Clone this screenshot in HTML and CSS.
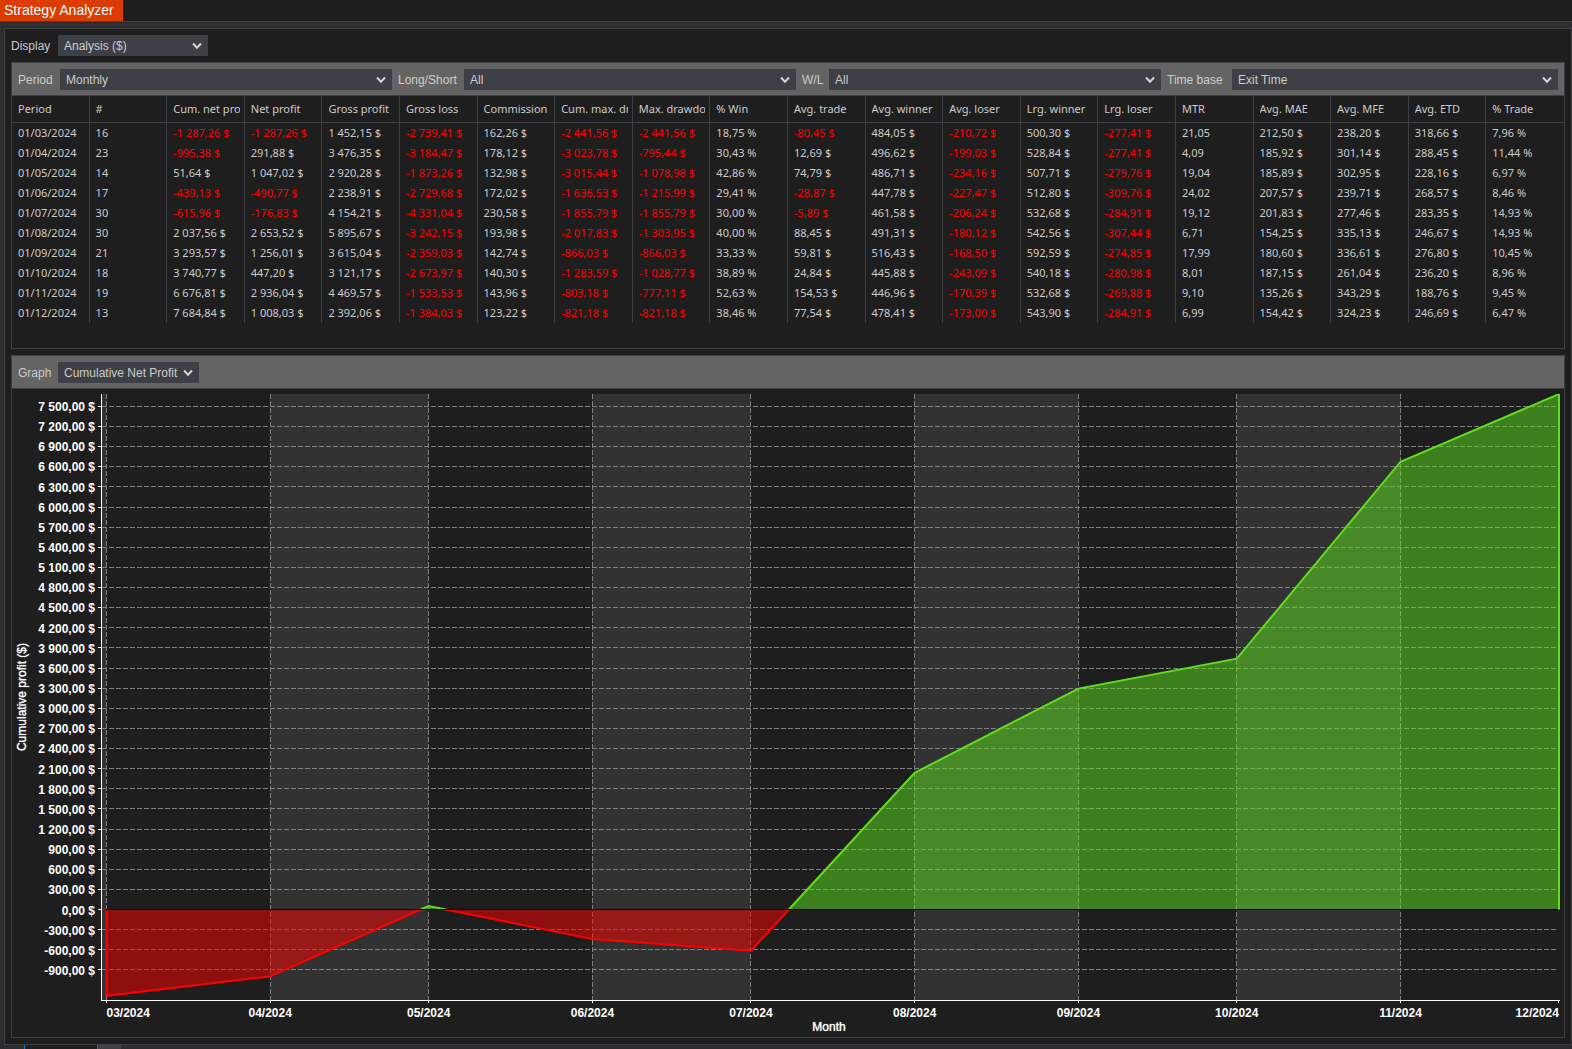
FILE: index.html
```html
<!DOCTYPE html>
<html lang="en">
<head>
<meta charset="utf-8">
<title>Strategy Analyzer</title>
<link rel="stylesheet" href="styles.css">
</head>
<body>
<header class="titlebar"><h1 class="tab">Strategy Analyzer</h1></header>
<main class="window">
  <div class="field display-field">
    <label for="display">Display</label>
    <span class="picker"><select id="display"><option>Analysis ($)</option></select><svg class="chevron" viewBox="0 0 10 8" aria-hidden="true"><path d="M1 1.5 5 5.8 9 1.5"/></svg></span>
  </div>

  <section class="panel results">
    <div class="toolbar">
      <label class="w-period" for="period">Period</label>
      <span class="picker grow"><select id="period"><option>Monthly</option></select><svg class="chevron" viewBox="0 0 10 8" aria-hidden="true"><path d="M1 1.5 5 5.8 9 1.5"/></svg></span>
      <label class="w-side" for="side">Long/Short</label>
      <span class="picker grow"><select id="side"><option>All</option></select><svg class="chevron" viewBox="0 0 10 8" aria-hidden="true"><path d="M1 1.5 5 5.8 9 1.5"/></svg></span>
      <label class="w-wl" for="wl">W/L</label>
      <span class="picker grow"><select id="wl"><option>All</option></select><svg class="chevron" viewBox="0 0 10 8" aria-hidden="true"><path d="M1 1.5 5 5.8 9 1.5"/></svg></span>
      <label class="w-base" for="base">Time base</label>
      <span class="picker grow last"><select id="base"><option>Exit Time</option></select><svg class="chevron" viewBox="0 0 10 8" aria-hidden="true"><path d="M1 1.5 5 5.8 9 1.5"/></svg></span>
    </div>
    <table class="grid">
      <thead><tr id="columns"></tr></thead>
      <tbody id="rows"></tbody>
    </table>
  </section>

  <section class="panel graph">
    <div class="toolbar">
      <label class="w-graph" for="graph">Graph</label>
      <span class="picker graph-picker"><select id="graph"><option>Cumulative Net Profit</option></select><svg class="chevron" viewBox="0 0 10 8" aria-hidden="true"><path d="M1 1.5 5 5.8 9 1.5"/></svg></span>
    </div>
    <div class="chart">
      <div class="y-title"><span>Cumulative profit ($)</span></div>
      <div class="y-labels" id="y-labels"></div>
      <svg class="plot" id="plot" viewBox="0 0 1462 610" preserveAspectRatio="none" role="img" aria-label="Cumulative net profit by month"></svg>
      <svg class="x-labels" id="x-labels"></svg>
      <div class="x-title">Month</div>
    </div>
  </section>
</main>
<footer class="tabstrip"><span class="sheet"></span><span class="add"></span></footer>
<script src="app.js"></script>
</body>
</html>
```
FILE: styles.css
```css
* { box-sizing: border-box; }

body {
  margin: 0;
  min-height: 100vh;
  display: flex;
  flex-direction: column;
  background: #2d2d30;
  color: #ccc;
  font: 12px/14px "Liberation Sans", Arial, sans-serif;
}

.titlebar {
  display: flex;
  height: 22px;
  background: #1e1e1e;
  border-bottom: 1px solid #3f3f46;
}

.tab {
  margin: 0;
  padding: 0 6px 0 4px;
  min-width: 123px;
  background: #dc3c00;
  color: #fff;
  font-size: 14px;
  font-weight: 400;
  line-height: 20px;
}

.window {
  flex: 1;
  display: flex;
  flex-direction: column;
  gap: 6px;
  margin: 6px 0 0 4px;
  padding: 6px;
  background: #1e1e1e;
  border: 1px solid #3f3f46;
}

.field { display: flex; align-items: center; }
.display-field label { width: 47px; }
.display-field .picker { width: 150px; }

.picker { display: grid; align-items: center; }
.picker > * { grid-area: 1 / 1; }

select {
  appearance: none;
  width: 100%;
  height: 21px;
  margin: 0;
  padding: 0 20px 0 6px;
  border: 0;
  border-radius: 0;
  background: #3f3f46;
  color: #ccc;
  font: inherit;
}

.chevron {
  justify-self: end;
  width: 10px;
  height: 8px;
  margin-right: 6px;
  fill: none;
  stroke: #d4d4d4;
  stroke-width: 2;
  pointer-events: none;
}

.panel { border: 1px solid #3f3f46; }

.toolbar {
  display: flex;
  align-items: center;
  height: 33px;
  padding-top: 1px;
  background: #646464;
  border-bottom: 1px solid #3f3f46;
}

.toolbar label { padding-left: 6px; flex: none; }
.w-period { width: 48px; }
.w-side { width: 72px; }
.w-wl { width: 33px; }
.w-base { width: 71px; }
.w-graph { width: 46px; }
.grow { flex: 1 1 0; }
.last select { width: calc(100% - 6px); }
.last .chevron { margin-right: 12px; }
.graph-picker { width: 141px; }

.results { padding-bottom: 25px; }

.grid {
  width: 100%;
  table-layout: fixed;
  border-collapse: separate;
  border-spacing: 0;
  font: 11px/20px "Noto Sans", "Open Sans", sans-serif;
}

.grid th, .grid td {
  height: 20px;
  padding: 0 4px 0 6px;
  border-right: 1px solid #3f3f46;
  text-align: left;
  font-weight: 400;
  white-space: nowrap;
  overflow: hidden;
}

.grid th {
  height: 27px;
  border-bottom: 1px solid #3f3f46;
}
.grid th span { display: block; overflow: hidden; }
.grid th:last-child, .grid td:last-child { border-right: 0; }
.grid .loss { color: #f00; }

.graph { flex: 1; display: flex; flex-direction: column; }

.chart {
  flex: 1;
  display: grid;
  grid-template-columns: 20px 63px 3px 1fr;
  grid-template-rows: 1fr 16px 14px;
  padding: 5px 4px 3px 0;
  color: #fff;
}

.y-title {
  grid-area: 1 / 1;
  display: flex;
  align-items: center;
  justify-content: center;
  padding-bottom: 4px;
}
.y-title span { writing-mode: vertical-rl; transform: rotate(180deg); white-space: nowrap; }
.y-title, .x-title { text-shadow: 0 0 1px #fff; }

.y-labels {
  grid-area: 1 / 2;
  display: flex;
  flex-direction: column;
  padding: 3px 0 23px;
  text-align: right;
  font-weight: 700;
}
.y-labels span { flex: 1; display: flex; align-items: center; justify-content: flex-end; }

.plot { grid-area: 1 / 4; width: 100%; height: 100%; min-height: 300px; }
.plot * { vector-effect: non-scaling-stroke; }

.band { fill: #323232; }
.rule { stroke: #808080; stroke-dasharray: 5 2; shape-rendering: crispEdges; }
.axis { stroke: #fff; shape-rendering: crispEdges; }
.zero { stroke: #000; shape-rendering: crispEdges; }
.fill-up { fill: #60e21e; fill-opacity: .5; }
.fill-down { fill: #f00; fill-opacity: .5; }
.line-up, .line-down { fill: none; stroke-width: 2; }
.line-up { stroke: #5fdf1b; }
.line-down { stroke: #f00; }

.x-labels { grid-area: 2 / 4; width: 100%; height: 15px; overflow: visible; fill: #fff; font-weight: 700; }
.x-title { grid-area: 3 / 4; text-align: center; }

.tabstrip { display: flex; height: 4px; padding-left: 24px; }
.sheet { width: 74px; background: #1e1e1e; border: solid #007acc; border-width: 0 1px; }
.add { width: 23px; background: #3f3f46; }
```
FILE: app.js
```js
const columns = ["Period", "#", "Cum. net profit", "Net profit", "Gross profit", "Gross loss", "Commission",
  "Cum. max. drawdown", "Max. drawdown", "% Win", "Avg. trade", "Avg. winner", "Avg. loser", "Lrg. winner",
  "Lrg. loser", "MTR", "Avg. MAE", "Avg. MFE", "Avg. ETD", "% Trade"];

const rows = `
01/03/2024|16|-1 287,26 $|-1 287,26 $|1 452,15 $|-2 739,41 $|162,26 $|-2 441,56 $|-2 441,56 $|18,75 %|-80,45 $|484,05 $|-210,72 $|500,30 $|-277,41 $|21,05|212,50 $|238,20 $|318,66 $|7,96 %
01/04/2024|23|-995,38 $|291,88 $|3 476,35 $|-3 184,47 $|178,12 $|-3 023,78 $|-795,44 $|30,43 %|12,69 $|496,62 $|-199,03 $|528,84 $|-277,41 $|4,09|185,92 $|301,14 $|288,45 $|11,44 %
01/05/2024|14|51,64 $|1 047,02 $|2 920,28 $|-1 873,26 $|132,98 $|-3 015,44 $|-1 078,98 $|42,86 %|74,79 $|486,71 $|-234,16 $|507,71 $|-279,76 $|19,04|185,89 $|302,95 $|228,16 $|6,97 %
01/06/2024|17|-439,13 $|-490,77 $|2 238,91 $|-2 729,68 $|172,02 $|-1 636,53 $|-1 215,99 $|29,41 %|-28,87 $|447,78 $|-227,47 $|512,80 $|-309,76 $|24,02|207,57 $|239,71 $|268,57 $|8,46 %
01/07/2024|30|-615,96 $|-176,83 $|4 154,21 $|-4 331,04 $|230,58 $|-1 855,79 $|-1 855,79 $|30,00 %|-5,89 $|461,58 $|-206,24 $|532,68 $|-284,91 $|19,12|201,83 $|277,46 $|283,35 $|14,93 %
01/08/2024|30|2 037,56 $|2 653,52 $|5 895,67 $|-3 242,15 $|193,98 $|-2 017,83 $|-1 303,95 $|40,00 %|88,45 $|491,31 $|-180,12 $|542,56 $|-307,44 $|6,71|154,25 $|335,13 $|246,67 $|14,93 %
01/09/2024|21|3 293,57 $|1 256,01 $|3 615,04 $|-2 359,03 $|142,74 $|-866,03 $|-866,03 $|33,33 %|59,81 $|516,43 $|-168,50 $|592,59 $|-274,85 $|17,99|180,60 $|336,61 $|276,80 $|10,45 %
01/10/2024|18|3 740,77 $|447,20 $|3 121,17 $|-2 673,97 $|140,30 $|-1 283,59 $|-1 028,77 $|38,89 %|24,84 $|445,88 $|-243,09 $|540,18 $|-280,98 $|8,01|187,15 $|261,04 $|236,20 $|8,96 %
01/11/2024|19|6 676,81 $|2 936,04 $|4 469,57 $|-1 533,53 $|143,96 $|-803,18 $|-777,11 $|52,63 %|154,53 $|446,96 $|-170,39 $|532,68 $|-269,88 $|9,10|135,26 $|343,29 $|188,76 $|9,45 %
01/12/2024|13|7 684,84 $|1 008,03 $|2 392,06 $|-1 384,03 $|123,22 $|-821,18 $|-821,18 $|38,46 %|77,54 $|478,41 $|-173,00 $|543,90 $|-284,91 $|6,99|154,42 $|324,23 $|246,69 $|6,47 %
`.trim().split("\n").map(line => line.split("|"));

document.getElementById("columns").innerHTML =
  columns.map(c => `<th scope="col"><span>${c}</span></th>`).join("");
document.getElementById("rows").innerHTML = rows.map(r =>
  `<tr>${r.map(v => `<td${v[0] === "-" ? ' class="loss"' : ""}>${v}</td>`).join("")}</tr>`).join("");

// Chart geometry, in units of the plot's view box
const W = 1462, AXIS_X = 3.5, AXIS_Y = 606.5, ZERO = 515.5, PER_UNIT = 20.12 / 300;
const FIRST = 8.5, LAST = 1461;
const toNumber = s => parseFloat(s.replace(/[ $]/g, "").replace(",", "."));
const day = s => { const [d, m, y] = s.split("/"); return Date.UTC(y, m - 1, d) / 864e5; };
const start = day(rows[0][0]), span = day(rows[rows.length - 1][0]) - start;
const points = rows.map(r => {
  const value = toNumber(r[2]);
  return {
    label: r[0].slice(3),
    value,
    x: FIRST + (day(r[0]) - start) / span * (LAST - FIRST),
    y: ZERO - value * PER_UNIT
  };
});
const snap = v => Math.floor(v) + 0.5;
const line = (cls, x1, y1, x2, y2) => `<line class="${cls}" x1="${x1}" y1="${y1}" x2="${x2}" y2="${y2}"/>`;

const ticks = [];
for (let v = 7500; v >= -900; v -= 300) ticks.push(v);

let svg = `<rect class="band" x="4" y="0" width="4" height="606"/>`;
for (let i = 1; i < points.length - 1; i += 2) {
  const a = snap(points[i].x), b = snap(points[i + 1].x);
  svg += `<rect class="band" x="${a}" y="0" width="${b - a}" height="606"/>`;
}
ticks.forEach(v => {
  const y = snap(ZERO - v * PER_UNIT);
  if (v !== 0) svg += line("rule", 4, y, W - 2, y);
  svg += line("axis", 0, y, 3, y);
});
points.forEach((p, i) => {
  const x = snap(i === points.length - 1 ? LAST - 1 : p.x);
  if (i < points.length - 1) svg += line("rule", x, 0, x, 606);
  svg += line("axis", x, 606, x, 609);
});

// Split the curve wherever it crosses zero
const runs = [];
let run = { up: points[0].value > 0, pts: [[points[0].x, ZERO]] };
points.forEach((p, i) => {
  const prev = points[i - 1];
  if (prev && (prev.value > 0) !== (p.value > 0)) {
    const x = prev.x + (p.x - prev.x) * prev.value / (prev.value - p.value);
    run.pts.push([x, ZERO]);
    runs.push(run);
    run = { up: p.value > 0, pts: [[x, ZERO]] };
  }
  run.pts.push([p.x, p.y]);
});
run.pts.push([points[points.length - 1].x, ZERO]);
runs.push(run);
runs.forEach(r => {
  const pts = r.pts.map(p => p.join()).join(" "), side = r.up ? "up" : "down";
  svg += `<polygon class="fill-${side}" points="${pts}"/><polyline class="line-${side}" points="${pts}"/>`;
});
svg += line("zero", 8, ZERO, W - 2, ZERO);
svg += line("axis", AXIS_X, 0, AXIS_X, 607) + line("axis", 3, AXIS_Y, W, AXIS_Y);
document.getElementById("plot").innerHTML = svg;

const money = v => (Math.abs(v) >= 1000 ? `${Math.floor(v / 1000)} ${String(v % 1000).padStart(3, "0")}` : v) + ",00 $";
document.getElementById("y-labels").innerHTML = ticks.map(v => `<span>${money(v)}</span>`).join("");
document.getElementById("x-labels").innerHTML = points.map((p, i) => {
  const anchor = i === 0 ? "start" : i === points.length - 1 ? "end" : "middle";
  return `<text x="${(p.x / W * 100).toFixed(2)}%" y="13" text-anchor="${anchor}">${p.label}</text>`;
}).join("");
```
